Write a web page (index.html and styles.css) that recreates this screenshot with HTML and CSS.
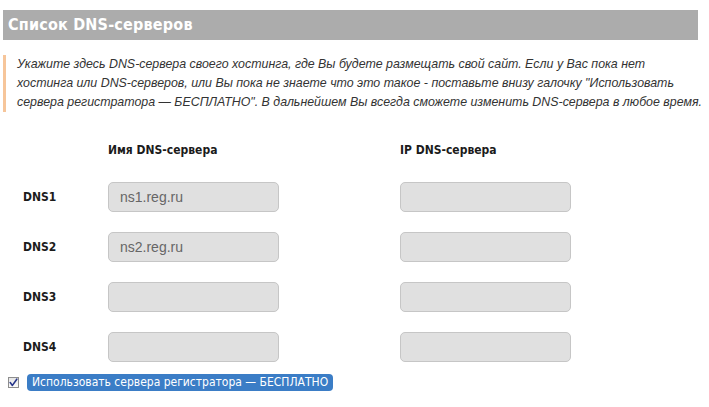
FILE: index.html
```html
<!DOCTYPE html>
<html lang="ru">
<head>
<meta charset="utf-8">
<title>Список DNS-серверов</title>
<link rel="stylesheet" href="styles.css">
</head>
<body>
<div class="page">
  <h2 class="title">Список DNS-серверов</h2>
  <div class="note">Укажите здесь DNS-сервера своего хостинга, где Вы будете размещать свой сайт. Если у Вас пока нет<br>хостинга или DNS-серверов, или Вы пока не знаете что это такое - поставьте внизу галочку "Использовать<br>сервера регистратора — БЕСПЛАТНО". В дальнейшем Вы всегда сможете изменить DNS-сервера в любое время.</div>
  <div class="grid">
    <div class="head"></div>
    <div class="head">Имя DNS-сервера</div>
    <div class="head">IP DNS-сервера</div>

    <div class="lbl">DNS1</div>
    <div class="field">ns1.reg.ru</div>
    <div class="field"></div>

    <div class="lbl">DNS2</div>
    <div class="field">ns2.reg.ru</div>
    <div class="field"></div>

    <div class="lbl">DNS3</div>
    <div class="field"></div>
    <div class="field"></div>

    <div class="lbl">DNS4</div>
    <div class="field"></div>
    <div class="field"></div>
  </div>
  <div class="check-row">
    <span class="checkbox">
      <svg width="9" height="9" viewBox="0 0 9 9"><path d="M1.2 4.6 L3.4 7.4 L7.8 1.2" fill="none" stroke="#27368a" stroke-width="1.6" stroke-linejoin="round" stroke-linecap="round"/></svg>
    </span>
    <span class="check-label">Использовать сервера регистратора — БЕСПЛАТНО</span>
  </div>
</div>
</body>
</html>
```

FILE: styles.css
```css
html, body {
  margin: 0;
  padding: 0;
  background: #fff;
}
.page {
  width: 709px;
  height: 407px;
  overflow: hidden;
  font-family: "Liberation Sans", Arial, sans-serif;
}
.title {
  margin: 10px 0 0 3px;
  width: 690px;
  height: 30px;
  padding-left: 5px;
  background: #acacac;
  color: #fff;
  font-family: "DejaVu Sans Condensed", "DejaVu Sans", sans-serif;
  font-weight: bold;
  font-size: 16px;
  letter-spacing: 0.2px;
  line-height: 30px;
}
.note {
  margin: 15px 0 0 3px;
  padding: 0 4px 0 11px;
  border-left: 3px solid #f6c59a;
  font-style: italic;
  font-size: 12.4px;
  line-height: 19px;
  color: #333;
  white-space: nowrap;
  width: 690px;
  box-sizing: border-box;
}
.grid {
  display: grid;
  grid-template-columns: 85px 292px 172px;
  grid-auto-rows: 30px;
  row-gap: 20px;
  margin: 20px 0 0 23px;
}
.head {
  display: flex;
  align-items: center;
  padding-top: 6px;
  font-family: "DejaVu Sans Condensed", "DejaVu Sans", sans-serif;
  font-weight: bold;
  font-size: 12px;
  color: #1b1b1b;
}
.lbl {
  display: flex;
  align-items: center;
  font-family: "DejaVu Sans Condensed", "DejaVu Sans", sans-serif;
  font-weight: bold;
  font-size: 12px;
  color: #1b1b1b;
}
.field {
  width: 171px;
  box-sizing: border-box;
  height: 30px;
  border: 1px solid #c6c6c6;
  border-radius: 5px;
  background: #e0e0e0;
  padding-left: 11px;
  font-size: 14px;
  line-height: 28px;
  color: #666;
}
.check-row {
  display: flex;
  align-items: center;
  margin: 12px 0 0 8px;
  height: 17px;
}
.checkbox {
  width: 11px;
  height: 11px;
  box-sizing: border-box;
  border: 1px solid #8d8d8d;
  background: linear-gradient(#e6e6e6, #fafafa);
  display: flex;
  align-items: center;
  justify-content: center;
}
.checkbox svg { display: block; }
.check-label {
  margin-left: 8px;
  height: 17px;
  padding: 0 5px;
  border-radius: 4px;
  background: #3b7dc6;
  color: #fff;
  font-family: "DejaVu Sans Condensed", "DejaVu Sans", sans-serif;
  font-size: 12px;
  line-height: 17px;
}
```
